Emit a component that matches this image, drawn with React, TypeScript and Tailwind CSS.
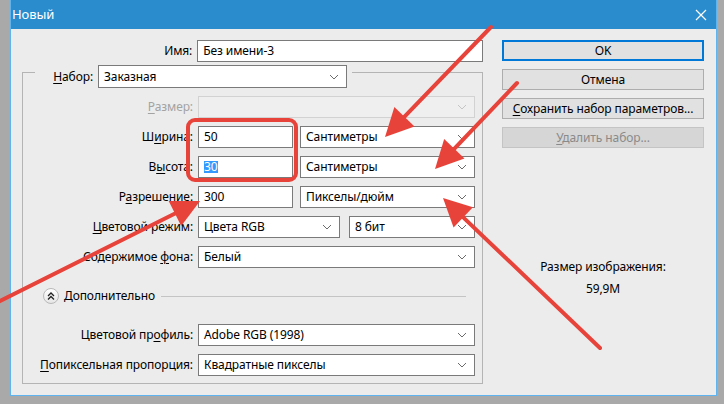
import React from 'react'

const RED = '#e8433a'

function Chevron({ disabled = false }: { disabled?: boolean }) {
  return (
    <svg width="10" height="6" viewBox="0 0 10 6" className="shrink-0">
      <polyline points="1,1 5,5 9,1" fill="none" stroke={disabled ? '#c4c4c4' : '#6b6b6b'} strokeWidth="1" />
    </svg>
  )
}

function Input({ w, children }: { w: string; children?: React.ReactNode }) {
  return (
    <div className={`${w} h-[22px] border border-[#7a7a7a] bg-white pl-[5px] flex items-center`}>{children}</div>
  )
}

function Select({ w, children, disabled = false }: { w: string; children?: React.ReactNode; disabled?: boolean }) {
  return (
    <div
      className={`${w} h-[22px] border ${disabled ? 'border-[#d2d2d2] bg-[#efefef]' : 'border-[#7a7a7a] bg-white'} pl-[5px] pr-[7px] flex items-center justify-between`}
    >
      <span>{children}</span>
      <Chevron disabled={disabled} />
    </div>
  )
}

function Row({ label, children, disabled = false }: { label: React.ReactNode; children: React.ReactNode; disabled?: boolean }) {
  return (
    <div className="flex items-center h-[22px]">
      <div className={`w-[175px] text-right pr-[5px] ${disabled ? 'text-[#a3a3a3]' : ''}`}>{label}</div>
      <div className="flex items-center gap-[7px]">{children}</div>
    </div>
  )
}

function Btn({ children, primary = false, disabled = false }: { children: React.ReactNode; primary?: boolean; disabled?: boolean }) {
  const cls = primary
    ? 'border-2 border-[#0078d7] bg-[#e1e1e1]'
    : disabled
      ? 'border border-[#c4c4c4] bg-[#d6d6d6] text-[#8a8a8a]'
      : 'border border-[#adadad] bg-[#e1e1e1]'
  return <div className={`w-[202px] h-[21px] flex items-center justify-center ${cls}`}>{children}</div>
}

function arrow(x1: number, y1: number, x2: number, y2: number, len = 28, half = 14) {
  const dx = x2 - x1
  const dy = y2 - y1
  const L = Math.hypot(dx, dy)
  const ux = dx / L
  const uy = dy / L
  const bx = x2 - ux * len
  const by = y2 - uy * len
  const px = -uy
  const py = ux
  return {
    line: [x1, y1, bx + ux * 4, by + uy * 4],
    head: `${x2},${y2} ${bx + px * half},${by + py * half} ${bx - px * half},${by - py * half}`,
  }
}

const arrows = [
  arrow(491, 27, 385, 137),
  arrow(517, 83, 435, 169),
  arrow(600, 348, 443, 198),
  arrow(-4, 303, 200, 201),
]

export default function App() {
  return (
    <div className="relative w-[724px] h-[404px] overflow-hidden bg-[#a9a9a9] font-['Noto_Sans',sans-serif] text-[12px] tracking-[-0.1px] leading-none text-black">
      <div className="ml-[10px] w-[707px] h-[396px] flex flex-col border-x border-b border-[#5fb3ee] bg-[#ececec]">
        {/* title bar */}
        <div className="h-[29px] bg-[#2a8ccc] flex items-center justify-between pl-[1px] pr-[9px] text-white text-[13px]">
          <span>Новый</span>
          <svg width="12" height="12" viewBox="0 0 12 12">
            <path d="M1 1 L11 11 M11 1 L1 11" stroke="#fff" strokeWidth="1.2" />
          </svg>
        </div>

        <div className="flex flex-1">
          {/* left form */}
          <div className="w-[472px] flex flex-col">
            <div className="mt-[11px] flex items-center h-[21px]">
              <div className="w-[187px] text-right pr-[5px]">Имя:</div>
              <Input w="w-[287px]">Без имени-3</Input>
            </div>

            <div className="ml-[11px] mt-[11px] w-[461px] h-[312px] border border-[#b4b4b4] flex flex-col">
              <div className="-mt-[8px] ml-[12px] self-start flex items-center bg-[#ececec] pr-[5px]">
                <div className="w-[63px] text-right pr-[5px]">
                  <u className="underline-offset-2">Н</u>абор:
                </div>
                <Select w="w-[249px] h-[23px]">Заказная</Select>
              </div>

              <div className="mt-[8px] flex flex-col gap-[8px]">
                <Row disabled label={<><u className="underline-offset-2">Р</u>азмер:</>}>
                  <Select disabled w="w-[277px]" />
                </Row>
                <Row label={<>Ш<u className="underline-offset-2">и</u>рина:</>}>
                  <Input w="w-[95px]">50</Input>
                  <Select w="w-[175px]">Сантиметры</Select>
                </Row>
                <Row label={<>В<u className="underline-offset-2">ы</u>сота:</>}>
                  <Input w="w-[95px]">
                    <span className="bg-[#3399ff] text-white">30</span>
                  </Input>
                  <Select w="w-[175px]">Сантиметры</Select>
                </Row>
                <Row label={<>Р<u className="underline-offset-2">а</u>зрешение:</>}>
                  <Input w="w-[95px]">300</Input>
                  <Select w="w-[175px]">Пикселы/дюйм</Select>
                </Row>
                <Row label={<><u className="underline-offset-2">Ц</u>ветовой режим:</>}>
                  <Select w="w-[142px]">Цвета RGB</Select>
                  <div className="ml-[2px]">
                    <Select w="w-[126px]">8 бит</Select>
                  </div>
                </Row>
                <Row label={<>Содержимое <u className="underline-offset-2">ф</u>она:</>}>
                  <Select w="w-[277px]">Белый</Select>
                </Row>
              </div>

              <div className="mt-[20px] ml-[20px] mr-[16px] h-[16px] flex items-center">
                <div className="w-[16px] h-[16px] rounded-full border border-[#b9b9b9] bg-gradient-to-b from-white to-[#e6e6e6] flex items-center justify-center">
                  <svg width="8" height="8" viewBox="0 0 8 8">
                    <polyline points="1,4 4,1 7,4" fill="none" stroke="#222" strokeWidth="1.3" />
                    <polyline points="1,7.5 4,4.5 7,7.5" fill="none" stroke="#222" strokeWidth="1.3" />
                  </svg>
                </div>
                <span className="ml-[5px]">Дополнительно</span>
                <div className="flex-1 ml-[6px] h-px bg-[#c4c4c4]" />
              </div>

              <div className="mt-[20px] flex flex-col gap-[8px]">
                <Row label={<>Цветовой пр<u className="underline-offset-2">о</u>филь:</>}>
                  <Select w="w-[277px]">Adobe RGB (1998)</Select>
                </Row>
                <Row label={<><u className="underline-offset-2">П</u>опиксельная пропорция:</>}>
                  <Select w="w-[277px]">Квадратные пикселы</Select>
                </Row>
              </div>
            </div>
          </div>

          {/* right buttons */}
          <div className="flex-1 flex flex-col pl-[19px]">
            <div className="mt-[11px] flex flex-col gap-[8px]">
              <Btn primary>OK</Btn>
              <Btn>Отмена</Btn>
              <Btn>
                <span>
                  <u className="underline-offset-2">С</u>охранить набор параметров...
                </span>
              </Btn>
              <Btn disabled>
                <span>
                  <u className="underline-offset-2">У</u>далить набор...
                </span>
              </Btn>
            </div>
            <div className="w-[202px] mt-[113px] flex flex-col items-center gap-[10px]">
              <span>Размер изображения:</span>
              <span>59,9M</span>
            </div>
          </div>
        </div>
      </div>

      {/* annotations */}
      <svg className="absolute inset-0 pointer-events-none" width="724" height="404" viewBox="0 0 724 404">
        <rect x="188" y="120" width="108" height="60" rx="7" fill="none" stroke={RED} strokeWidth="4" />
        {arrows.map((a, i) => (
          <g key={i}>
            <line x1={a.line[0]} y1={a.line[1]} x2={a.line[2]} y2={a.line[3]} stroke={RED} strokeWidth="4" strokeLinecap="round" />
            <polygon points={a.head} fill={RED} />
          </g>
        ))}
      </svg>
    </div>
  )
}
